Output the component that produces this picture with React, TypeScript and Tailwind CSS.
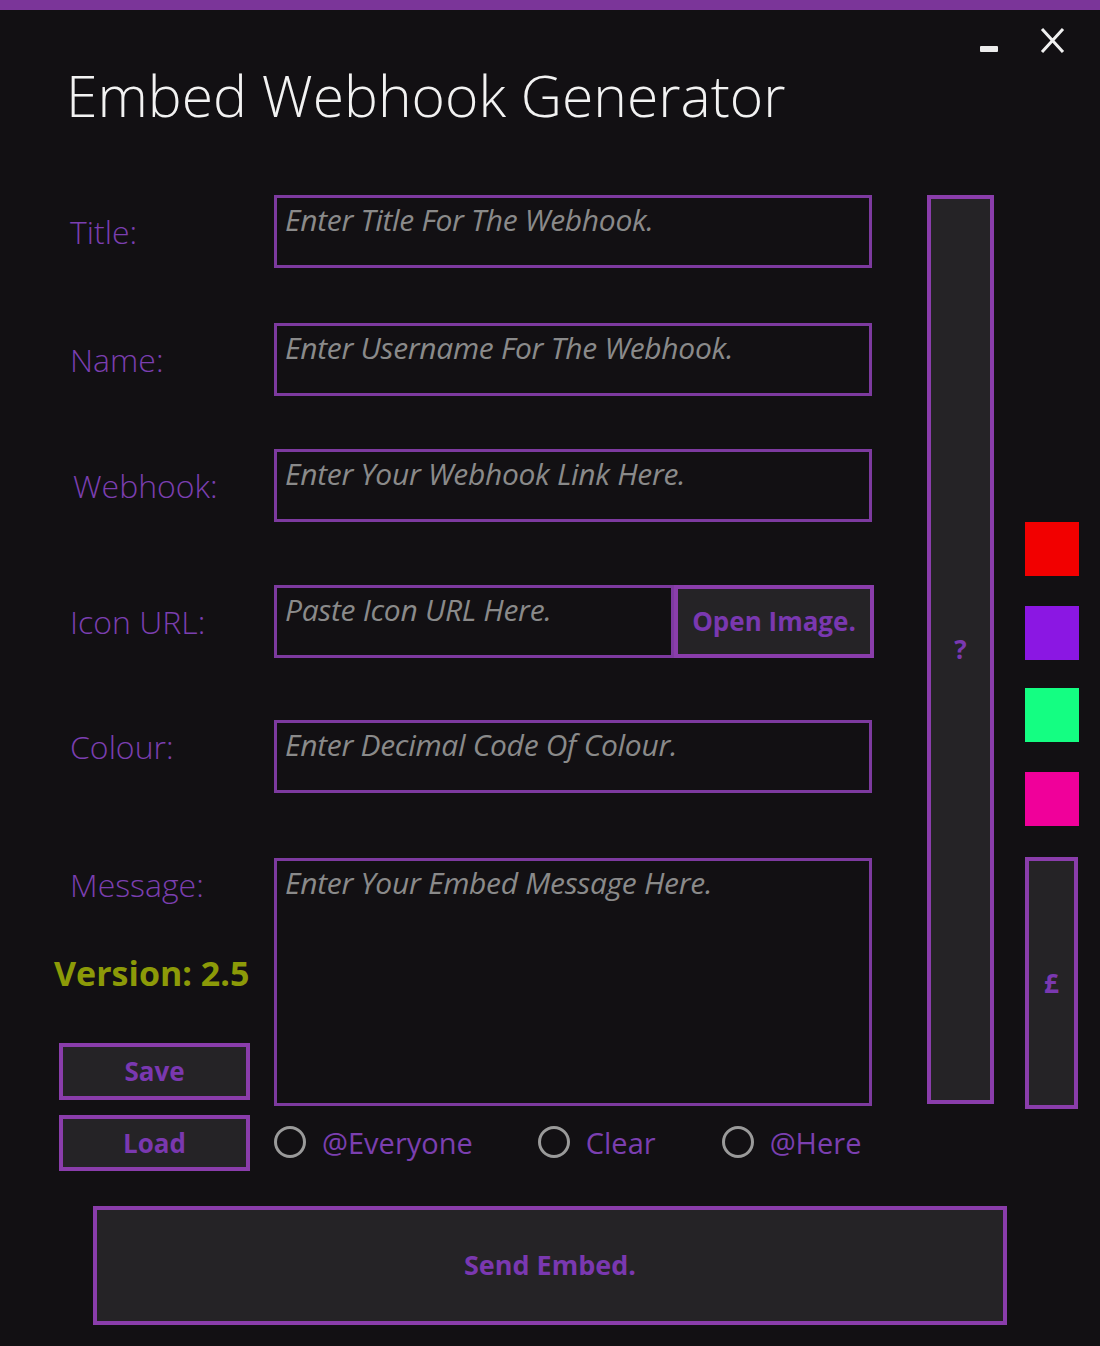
import React from 'react';

const font = { fontFamily: '"Open Sans", "Noto Sans", Arial, sans-serif' };

const labelCls = 'text-[32px] font-light text-[#7b3fb0] leading-[44px]';
const fieldCls = 'border-[3px] border-[#7d3a9f] bg-[#121013] px-[8px] pt-[7px]';
const hintCls = 'text-[30px] italic leading-none text-[#8a8a8a] whitespace-nowrap tracking-[-0.3px]';
const btnCls =
  'flex items-center justify-center border-4 border-[#8a3dab] bg-[#252326] text-[26px] font-bold text-[#7a38b0]';

function Field({ label, hint, labelClass = '' }: { label: string; hint: string; labelClass?: string }) {
  return (
    <div className="flex items-center">
      <div className={`w-[220px] pl-[16px] ${labelCls} ${labelClass}`}>{label}</div>
      <div className={`h-[73px] w-[598px] ${fieldCls}`}>
        <span className={hintCls}>{hint}</span>
      </div>
    </div>
  );
}

function Radio({ label, className = '' }: { label: string; className?: string }) {
  return (
    <div className={`flex items-center gap-[16px] ${className}`}>
      <span className="h-[32px] w-[32px] rounded-full border-[3px] border-[#9a9a9a]" />
      <span className="text-[29px] leading-none text-[#7b3fb0]">{label}</span>
    </div>
  );
}

export default function App() {
  return (
    <div className="h-[1346px] w-[1100px] overflow-hidden bg-[#121013]" style={font}>
      {/* top accent bar */}
      <div className="h-[10px] bg-[#7b3599]" />

      {/* header */}
      <div className="flex h-[185px] items-start justify-between">
        <h1 className="ml-[66px] mt-[57px] text-[57px] font-light leading-none text-[#f2f2f2]">
          Embed Webhook Generator
        </h1>
        <div className="mr-[35px] mt-[18px] flex items-start gap-[42px]">
          <span className="mt-[18px] h-[6px] w-[18px] rounded-[1px] bg-[#ececec]" />
          <svg width="25" height="25" viewBox="0 0 25 25">
            <path d="M2 1 L23 24 M23 1 L2 24" stroke="#f0f0f0" strokeWidth="3" />
          </svg>
        </div>
      </div>

      {/* body */}
      <div className="flex items-start pl-[54px]">
        <div className="w-[820px]">
          <Field label="Title:" hint="Enter Title For The Webhook." />
          <div className="mt-[55px]">
            <Field label="Name:" hint="Enter Username For The Webhook." />
          </div>
          <div className="mt-[53px]">
            <Field label="Webhook:" hint="Enter Your Webhook Link Here." labelClass="pl-[19px]" />
          </div>

          <div className="mt-[63px] flex items-center">
            <div className={`w-[220px] pl-[16px] ${labelCls}`}>Icon URL:</div>
            <div className={`h-[73px] w-[400px] ${fieldCls}`}>
              <span className={hintCls}>Paste Icon URL Here.</span>
            </div>
            <button className={`h-[73px] w-[200px] ${btnCls}`}>Open Image.</button>
          </div>

          <div className="mt-[62px]">
            <Field label="Colour:" hint="Enter Decimal Code Of Colour." labelClass="mb-[20px]" />
          </div>

          <div className="mt-[65px] flex items-start">
            <div className="w-[220px]">
              <div className={`mt-[5px] pl-[16px] ${labelCls}`}>Message:</div>
              <div className="mt-[44px] text-[34px] font-bold leading-[44px] text-[#8c9a08]">Version: 2.5</div>
              <button className={`ml-[5px] mt-[48px] h-[57px] w-[191px] ${btnCls}`}>Save</button>
              <button className={`ml-[5px] mt-[15px] h-[56px] w-[191px] ${btnCls}`}>Load</button>
            </div>
            <div>
              <div className={`h-[248px] w-[598px] ${fieldCls}`}>
                <span className={hintCls}>Enter Your Embed Message Here.</span>
              </div>
              <div className="mt-[20px] flex h-[32px] items-center">
                <Radio label="@Everyone" />
                <Radio label="Clear" className="ml-[65px]" />
                <Radio label="@Here" className="ml-[66px]" />
              </div>
            </div>
          </div>
        </div>

        {/* tall help button */}
        <button className={`ml-[53px] h-[909px] w-[67px] ${btnCls}`}>?</button>

        {/* colour swatches */}
        <div className="ml-[31px] flex w-[54px] flex-col pt-[327px]">
          <div className="h-[54px] w-[54px] bg-[#f20000]" />
          <div className="mt-[30px] h-[54px] w-[54px] bg-[#8b17e3]" />
          <div className="mt-[28px] h-[54px] w-[54px] bg-[#14fe82]" />
          <div className="mt-[30px] h-[54px] w-[54px] bg-[#f0009a]" />
          <button className={`mt-[31px] h-[252px] w-[53px] ${btnCls}`}>£</button>
        </div>
      </div>

      <button className={`ml-[93px] mt-[35px] h-[119px] w-[914px] ${btnCls} text-[27px]`}>Send Embed.</button>
    </div>
  );
}
